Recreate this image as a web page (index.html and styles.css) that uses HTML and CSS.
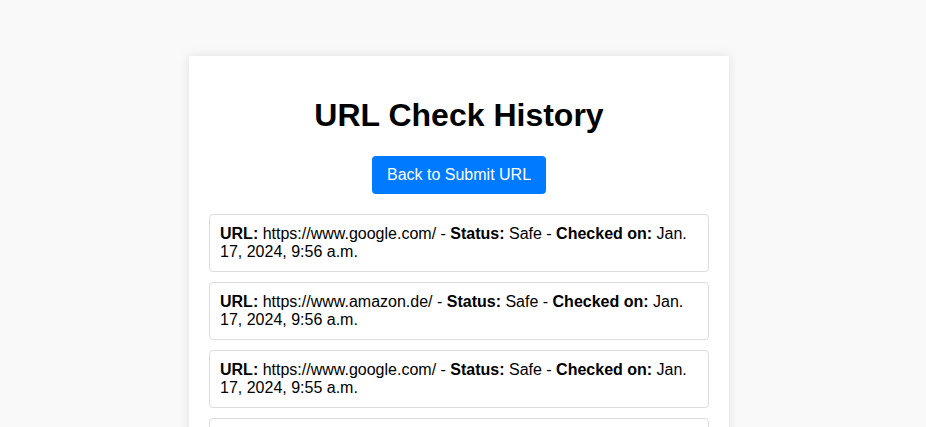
FILE: index.html
```html
<!DOCTYPE html>
<html lang="en">
<head>
<meta charset="utf-8">
<title>URL Check History</title>
<link rel="stylesheet" href="styles.css">
</head>
<body>
<div class="container">
  <h1 class="title">URL Check History</h1>
  <div class="actions">
    <a class="btn" href="#">Back to Submit URL</a>
  </div>
  <ul class="history">
    <li class="entry"><strong>URL:</strong> https://www.google.com/ - <strong>Status:</strong> Safe - <strong>Checked on:</strong> Jan. 17, 2024, 9:56 a.m.</li>
    <li class="entry"><strong>URL:</strong> https://www.amazon.de/ - <strong>Status:</strong> Safe - <strong>Checked on:</strong> Jan. 17, 2024, 9:56 a.m.</li>
    <li class="entry"><strong>URL:</strong> https://www.google.com/ - <strong>Status:</strong> Safe - <strong>Checked on:</strong> Jan. 17, 2024, 9:55 a.m.</li>
    <li class="entry"><strong>URL:</strong> https://www.google.com/ - <strong>Status:</strong> Safe - <strong>Checked on:</strong> Jan. 17, 2024, 9:54 a.m.</li>
    <li class="entry"><strong>URL:</strong> https://www.amazon.de/ - <strong>Status:</strong> Safe - <strong>Checked on:</strong> Jan. 17, 2024, 9:53 a.m.</li>
  </ul>
</div>
</body>
</html>
```
FILE: styles.css
```css
html, body {
  margin: 0;
  padding: 0;
}
body {
  background: #f9f9f9;
  font-family: "Liberation Sans", Arial, sans-serif;
  color: #000;
  padding: 56px 8px 0 0;
}
.container {
  width: 500px;
  margin: 0 auto;
  padding: 20px;
  background: #fff;
  box-shadow: 0 0 10px rgba(0, 0, 0, 0.1);
}
.title {
  font-size: 32px;
  font-weight: bold;
  text-align: center;
  margin: 21.44px 0;
}
.actions {
  display: flex;
  justify-content: center;
  margin-bottom: 20px;
}
.btn {
  display: inline-block;
  background: #007bff;
  color: #fff;
  text-decoration: none;
  font-size: 16px;
  line-height: 18px;
  padding: 10px 15px;
  border-radius: 4px;
}
.history {
  list-style: none;
  margin: 0;
  padding: 0;
}
.entry {
  border: 1px solid #ddd;
  border-radius: 4px;
  padding: 10px;
  margin-bottom: 10px;
  font-size: 16px;
  line-height: 18px;
}
```
